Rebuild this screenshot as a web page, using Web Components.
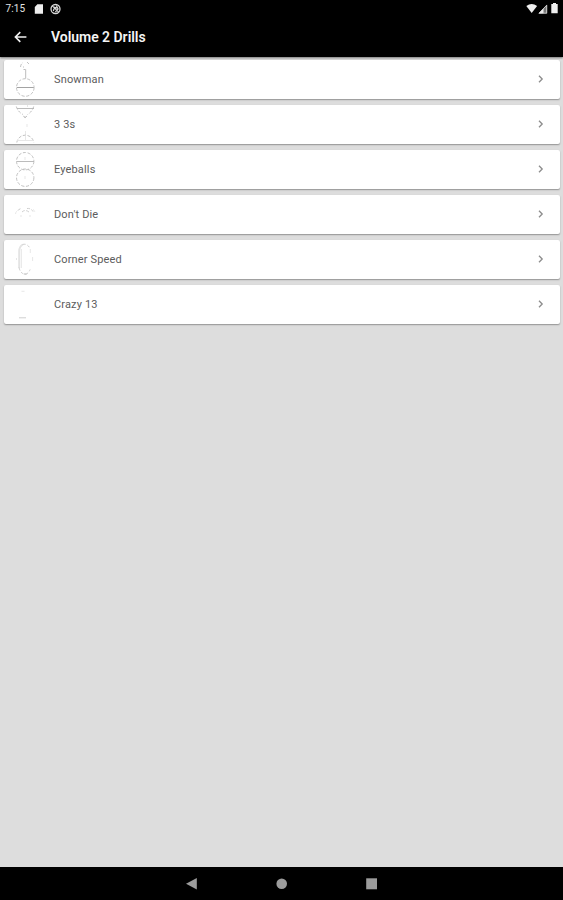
<!DOCTYPE html>
<html lang="en">
<head>
<meta charset="utf-8">
<title>Volume 2 Drills</title>
<style>
  html, body { margin: 0; height: 100%; }
  body { font-family: Roboto, "Liberation Sans", sans-serif; overflow: hidden; }
</style>
</head>
<body>
<drill-app></drill-app>

<script>
class StatusBar extends HTMLElement {
    constructor() {
        super();
        this.attachShadow({ mode: 'open' });
    }

    connectedCallback() {
        this.shadowRoot.innerHTML = `
            <style>
                :host { display: flex; height: 18px; background: #000; color: #e4e4e4; font-size: 10px; line-height: 18px; }
                .time { width: 28px; padding-left: 5.5px; letter-spacing: .15px; }
                .spacer { flex: 1; }
                svg { display: block; fill: #eee; }
            </style>
            <span class="time">7:15</span>
            <svg width="30" height="18" viewBox="0 0 30 18">
                <path d="M3.4 4.3H9v9.4H.8V7z"/>
                <circle cx="21.5" cy="9" r="4.5" fill="none" stroke="#d8d8d8" stroke-width="1.3"/>
                <path d="M18.3 5.8l6.4 6.4M19.3 11l1.3-3.8 3 1M22.3 5.5l1.8 3.5-2.7 3" fill="none" stroke="#d8d8d8" stroke-width="1.2"/>
            </svg>
            <span class="spacer"></span>
            <svg width="38" height="18" viewBox="0 0 38 18">
                <path d="M1.3 6.1Q6.7 1.8 12.1 6.1L6.7 13z"/>
                <path d="M13.5 13.5l8.6-9v9z" fill="#777"/>
                <path d="M13.5 13.5l5-5.2v5z"/>
                <path d="M14.2 13.2l7.5-8v8z" fill="none" stroke="#ddd" stroke-width=".8"/>
                <path d="M26.3 4h1.7V3h3v1h1.7v9.2h-6.4z"/>
            </svg>
        `;
    }
}

class AppHeader extends HTMLElement {
    constructor() {
        super();
        this.attachShadow({ mode: 'open' });
    }

    connectedCallback() {
        this.shadowRoot.innerHTML = `
            <style>
                :host { display: flex; align-items: center; height: 38.5px; background: #000; color: #f4f4f4; box-shadow: 0 1px 2px rgba(0,0,0,.45); }
                svg { display: block; margin-left: 13px; width: 15px; height: 14px; fill: none; stroke: #f0f0f0; stroke-width: 1.6; }
                h1 { margin: 0 0 0 23px; font-size: 14px; font-weight: 600; line-height: 18px; letter-spacing: -.03px; white-space: nowrap; }
            </style>
            <svg viewBox="0 0 15 14"><path d="M13.4 7H2.6M7.3 2.1L2.4 7l4.9 4.9"/></svg>
            <h1><slot></slot></h1>
        `;
    }
}

// Thumbnails, drawn on the full height of a card
const thumbs = {
    snowman: `
        <circle class="dash" cx="12.3" cy="27.5" r="8.8"/>
        <path class="dark" d="M3.8 27.5h17"/>
        <path class="mid" d="M12.7 9.5v9M10.5 9.5h2"/>
        <path class="dash" d="M7.5 7Q8 3.4 10 2.6M14 2l2 2M10 7h1"/>`,
    threes: `
        <path class="dash" d="M3.3 1.5Q5 7 10 9.5M20.7 1.5Q19 7 14.5 9.5"/>
        <path class="mid" d="M4 3.5h17"/>
        <path class="dark" d="M10.5 11.3l1.6 1.2 1.6-1.2"/>
        <path class="faint" d="M14 19v3M12.5 26v4M14.5 0v2"/>
        <path class="dash" d="M3.8 37.5a8.6 8.6 0 0 1 17 0"/>
        <path class="faint" d="M4 35.5h16.5M12.5 31v4"/>`,
    eyeballs: `
        <circle class="dash" cx="12.2" cy="11.2" r="8.7"/>
        <path class="mid" d="M4 11.5h17"/>
        <circle class="dash" cx="12.2" cy="27.7" r="8.7"/>
        <path class="faint" d="M12 26v3M12 7v3"/>`,
    die: `
        <path class="faint" stroke-dasharray="3 1.6" d="M2.5 19q.5-3.5 4-4.5M20 14.5q2 1 2 4"/>
        <path class="pale" stroke-dasharray="3 1.6" d="M5 15.5q1.5-2 4-2M14 13.5q4-.5 6 3M9 17q3-3 7 0"/>
        <path class="faint" d="M8 20v2M17 20v2"/>`,
    corner: `
        <path class="faint wide" d="M6.2 28V11q.2-4.5 3.6-6.5"/>
        <path class="pale" stroke-dasharray="3 2" d="M9.5 4.5q5-1.5 7.8 4.5M6 27.5q1.5 6.5 6.5 6.8 3-.8 4.6-4.8"/>
        <path class="faint" d="M8.4 9v19M17.3 9v4M19.6 17v4M3.5 18v2"/>
        <path class="mid" d="M11 34h2.5"/>`,
    crazy: `
        <path class="faint" d="M8.5 6.3h3"/>
        <path class="pale" d="M6 32.8h7"/>`
};

class DrillCard extends HTMLElement {
    constructor() {
        super();
        this.attachShadow({ mode: 'open' });
    }

    connectedCallback() {
        this.shadowRoot.innerHTML = `
            <style>
                :host {
                    display: flex;
                    align-items: center;
                    height: 39px;
                    background: #fff;
                    border-radius: 2px;
                    box-shadow: 0 1px 1.5px rgba(0,0,0,.34);
                    color: #5c5c5c;
                    font-size: 11px;
                }
                svg { display: block; flex: none; fill: none; }
                .thumb { width: 24px; height: 39px; margin-left: 9px; stroke-width: .9; }
                .dash { stroke: #bbb; stroke-dasharray: 3.2 1.6; }
                .dark { stroke: #999; }
                .mid { stroke: #b4b4b4; }
                .pale { stroke: #cacaca; }
                .faint { stroke: #e4e4e4; }
                .wide { stroke-width: 2; }
                .name { flex: 1; margin-left: 17px; line-height: 16px; letter-spacing: .15px; }
                .chevron { width: 8px; height: 10px; margin: 0 15px 1px 0; stroke: #8c8c8c; stroke-width: 1.3; }
            </style>
            <svg class="thumb" viewBox="0 0 24 39">${thumbs[this.getAttribute('thumb')]}</svg>
            <span class="name"><slot></slot></span>
            <svg class="chevron" viewBox="0 0 8 10"><path d="M2 1.7L5.2 5 2 8.3"/></svg>
        `;
    }
}

class NavBar extends HTMLElement {
    constructor() {
        super();
        this.attachShadow({ mode: 'open' });
    }

    connectedCallback() {
        this.shadowRoot.innerHTML = `
            <style>
                :host { display: flex; justify-content: center; align-items: center; gap: 78px; height: 33px; background: #000; }
                svg { display: block; width: 12px; height: 12px; fill: #9c9c9c; }
            </style>
            <svg viewBox="0 0 12 12"><path d="M0 5.7L10.8 0v11.6z"/></svg>
            <svg viewBox="0 0 12 12"><circle cx="5.7" cy="5.8" r="5.3"/></svg>
            <svg viewBox="0 0 12 12"><path d="M.2.3h10.8v11H.2z"/></svg>
        `;
    }
}

class DrillApp extends HTMLElement {
    constructor() {
        super();
        this.attachShadow({ mode: 'open' });
    }

    connectedCallback() {
        this.shadowRoot.innerHTML = `
            <style>
                :host { display: flex; flex-direction: column; height: 100vh; background: #ddd; }
                main { flex: 1; display: flex; flex-direction: column; gap: 6px; padding: 3.5px 3.5px 0 4px; }
            </style>
            <status-bar></status-bar>
            <app-header>Volume 2 Drills</app-header>
            <main>
                <drill-card thumb="snowman">Snowman</drill-card>
                <drill-card thumb="threes">3 3s</drill-card>
                <drill-card thumb="eyeballs">Eyeballs</drill-card>
                <drill-card thumb="die">Don't Die</drill-card>
                <drill-card thumb="corner">Corner Speed</drill-card>
                <drill-card thumb="crazy">Crazy 13</drill-card>
            </main>
            <nav-bar></nav-bar>
        `;
    }
}

customElements.define('status-bar', StatusBar);
customElements.define('app-header', AppHeader);
customElements.define('drill-card', DrillCard);
customElements.define('nav-bar', NavBar);
customElements.define('drill-app', DrillApp);
</script>
</body>
</html>
